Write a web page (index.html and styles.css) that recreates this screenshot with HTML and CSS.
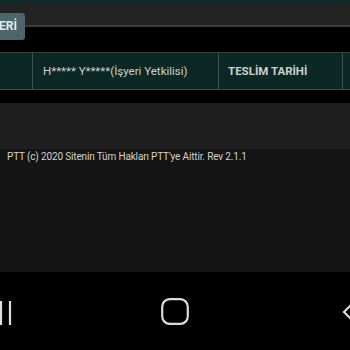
FILE: index.html
```html
<!DOCTYPE html>
<html>
<head>
<meta charset="utf-8">
<link rel="stylesheet" href="styles.css">
</head>
<body>
<div class="screen">
  <div class="topstrip"></div>
  <div class="band"></div>
  <div class="actions"><span class="btn">ERİ</span></div>
  <div class="table">
    <div class="cell c1"></div>
    <div class="cell c2">H***** Y*****(İşyeri Yetkilisi)</div>
    <div class="cell c3">TESLİM TARİHİ</div>
    <div class="cell c4"></div>
  </div>
  <div class="gap"></div>
  <div class="panel"></div>
  <div class="footer">PTT (c) 2020 Sitenin Tüm Hakları PTT'ye Aittir. Rev 2.1.1</div>
  <div class="navbar">
    <svg class="recents" width="16" height="26" viewBox="0 0 16 26"><path d="M2 1V25M11 1V25" stroke="#dcdcdc" stroke-width="2.2" fill="none"/></svg>
    <svg class="home" width="28" height="27" viewBox="0 0 28 27"><rect x="1.2" y="1.2" width="25.6" height="24.6" rx="7.5" stroke="#dcdcdc" stroke-width="2.2" fill="none"/></svg>
    <svg class="back" width="10" height="20" viewBox="0 0 10 20"><path d="M10 2L2 10L10 18" stroke="#dcdcdc" stroke-width="2.2" fill="none"/></svg>
  </div>
</div>
</body>
</html>
```
FILE: styles.css
```css
html, body {
  margin: 0;
  padding: 0;
  background: #000;
}
.screen {
  width: 350px;
  height: 350px;
  overflow: hidden;
  display: flex;
  flex-direction: column;
  font-family: Roboto, "Noto Sans", sans-serif;
}
.topstrip {
  height: 3px;
  background: #0f2a26;
  flex: none;
}
.band {
  height: 22px;
  background: #232323;
  border-bottom: 2px solid #3c3c3c;
  flex: none;
}
.actions {
  height: 25px;
  display: flex;
  flex: none;
}
.btn {
  margin-top: -14px;
  margin-left: -4px;
  width: 29px;
  height: 27px;
  padding: 0 0 0 3px;
  box-sizing: border-box;
  background: #4d6669;
  border-radius: 3px;
  color: #e4eaea;
  font-weight: bold;
  font-size: 12px;
  line-height: 27px;
  white-space: nowrap;
}
.table {
  height: 38px;
  box-sizing: border-box;
  border-top: 1px solid #34423f;
  border-bottom: 1px solid #3e4b48;
  background: #0c2825;
  display: flex;
  flex: none;
}
.cell {
  display: flex;
  align-items: center;
  color: #c9d2d0;
  font-size: 11.5px;
  box-sizing: border-box;
  border-right: 1.5px solid #44524f;
  white-space: nowrap;
}
.c1 { width: 33px; }
.c2 { width: 186px; padding-left: 10px; }
.c3 { width: 124px; padding-left: 9px; font-weight: bold; }
.c4 { flex: 1; border-right: none; }
.gap {
  height: 13px;
  flex: none;
}
.panel {
  height: 46px;
  background: #1e1e1e;
  flex: none;
}
.footer {
  height: 123px;
  background: #141414;
  color: #d2d2d2;
  font-size: 10px;
  letter-spacing: -0.15px;
  padding-left: 7px;
  line-height: 13px;
  padding-top: 1px;
  box-sizing: border-box;
  flex: none;
  white-space: nowrap;
}
.navbar {
  flex: 1;
  background: #000;
  display: grid;
  grid-template-columns: 1fr auto 1fr;
  align-items: start;
  padding-top: 26px;
}
.recents { justify-self: start; margin-left: -1px; margin-top: 2px; }
.home { justify-self: center; }
.back { justify-self: end; margin-right: -2px; margin-top: 4px; }
```
